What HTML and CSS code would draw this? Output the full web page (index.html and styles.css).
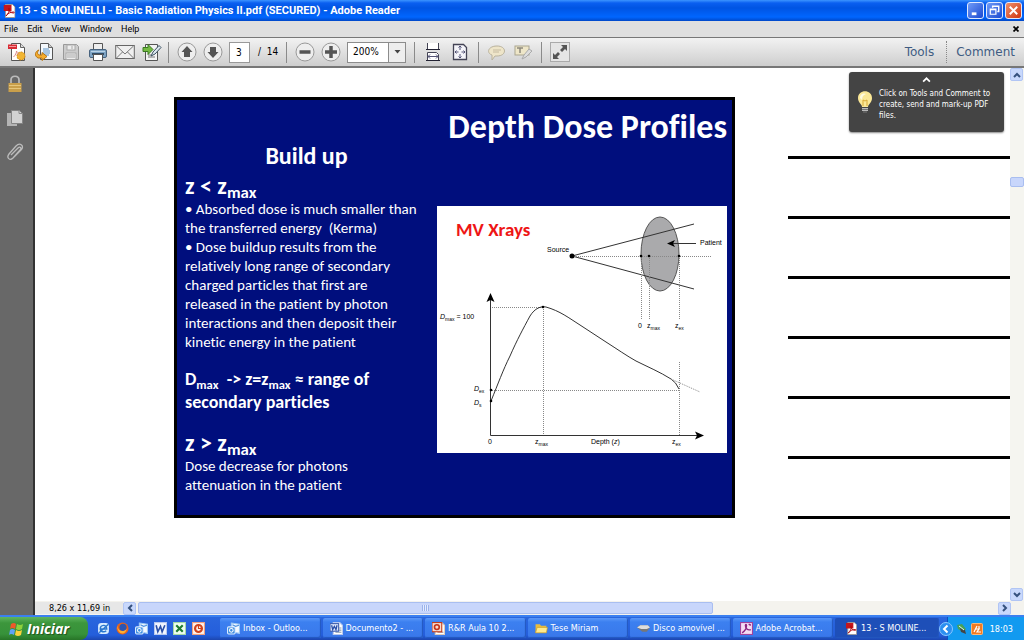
FILE: index.html
```
<!DOCTYPE html>
<html lang="en">
<head>
<meta charset="utf-8">
<title>13 - S MOLINELLI - Basic Radiation Physics II.pdf (SECURED) - Adobe Reader</title>
<link rel="stylesheet" href="styles.css">
</head>
<body>
<svg class="defs" aria-hidden="true">
  <defs>
    <symbol id="pdf" viewBox="0 0 12 14"><path d="M2 .5h7l2.500 2.500v10.500h-9.500z" fill="#fff" stroke="#999"/><rect y="1" width="8" height="6" fill="#c4161c"/><path d="M2.500 12c2-2 3.500-5 3.500-7 0-1.500-1.500-1-1 0 .5 2.500 2.500 4 5 4 1 0 1-1 0-1-3 0-6 1.500-7.500 4z" fill="none" stroke="#b00c12"/></symbol>
    <symbol id="outlook" viewBox="0 0 12 12"><path d="M4 1l7.500 1v8.500L4 9z" fill="#f4f9ff" stroke="#9cc8f4"/><rect x=".5" y="4.500" width="7" height="6.500" rx="1" fill="#3c8ce0" stroke="#dcecff"/><circle cx="4" cy="7.700" r="1.700" fill="none" stroke="#fff"/><path d="M5 2.500l3 1.500 3-1" stroke="#4a90e0" fill="none"/></symbol>
    <symbol id="word" viewBox="0 0 12 12"><rect x=".5" y=".5" width="11" height="11" fill="#f2f6ff" stroke="#b9c9ee"/><path d="M2 3l1.500 6L6 4l1.500 5L10 3" fill="none" stroke="#2a4fa8" stroke-width="1.500"/></symbol>
    <symbol id="worddoc" viewBox="0 0 12 12"><path d="M3 .5h6l2.500 2.500v8.500H3z" fill="#fff" stroke="#b9c9ee"/><path d="M8.500 5.500h2M8.500 7.500h2M5 9.500h5.500" stroke="#89a"/><rect y="1.500" width="8" height="7" fill="#dfe8fb" stroke="#3a5cae"/><path d="M1.500 3l1 4L4 4l1.500 3 1-4" fill="none" stroke="#2a4fa8" stroke-width="1.200"/></symbol>
    <symbol id="ppt" viewBox="0 0 12 12"><rect x=".5" y=".5" width="11" height="11" fill="#fff2ea" stroke="#f0a080"/><circle cx="6" cy="6" r="3.200" fill="none" stroke="#d0421c" stroke-width="2"/><path d="M6 2v4h4" fill="none" stroke="#d0421c"/></symbol>
    <symbol id="pptdoc" viewBox="0 0 12 12"><path d="M3 .5h6l2.500 2.500v8.500H3z" fill="#fff" stroke="#dcb"/><path d="M5 9.500h5.500" stroke="#a88"/><rect y=".5" width="9" height="8.500" fill="#f7d9cd" stroke="#c23c1a"/><circle cx="4.500" cy="4.700" r="2.200" fill="none" stroke="#c5331a" stroke-width="1.500"/></symbol>
  </defs>
</svg>

<header class="titlebar">
  <svg class="title-icon" viewBox="0 0 12 14"><use href="#pdf"/></svg>
  <span class="title-text">13 - S MOLINELLI - Basic Radiation Physics II.pdf (SECURED) - Adobe Reader</span>
  <button class="win" aria-label="Minimize"><svg viewBox="0 0 16 16"><path d="M4 11.500h5" stroke="#fff" stroke-width="3"/></svg></button>
  <button class="win" aria-label="Restore"><svg viewBox="0 0 16 16"><path d="M6 5V3.500h6.500V9H11" fill="none" stroke="#fff" stroke-width="1.500"/><path d="M3.500 6.500h6V12h-6zM3.500 7h6" fill="none" stroke="#fff" stroke-width="1.300"/></svg></button>
  <button class="win close" aria-label="Close"><svg viewBox="0 0 16 16"><path d="M4 4l8 8M12 4l-8 8" stroke="#fff" stroke-width="2"/></svg></button>
</header>

<nav class="menubar">
  <button>File</button><button>Edit</button><button>View</button><button>Window</button><button>Help</button>
  <button class="doc-close" aria-label="Close document"><svg viewBox="0 0 6 6"><path d="M.5.5l5 5M5.500.5l-5 5" stroke="#000" stroke-width="1.700"/></svg></button>
</nav>

<div class="toolbar">
  <div class="group files">
    <button class="tool" aria-label="Create PDF"><svg viewBox="0 0 20 20"><path d="M4.500 1.500h9l4 4v13h-13z" fill="#fff" stroke="#555"/><path d="M13.500 1.500v4h4" fill="#ddd" stroke="#666"/><rect x="1" y="2.500" width="9" height="4.500" fill="#d82c35"/><path d="M2 4.500h7" stroke="#f59a9e"/><circle cx="14" cy="14" r="4" fill="#f2b632" stroke="#cf8a1c" stroke-dasharray="2 1"/><path d="M6.500 15c2-2 3-4 3-6 1 3 2 3 3 4" fill="none" stroke="#d88"/></svg></button>
    <button class="tool" aria-label="Open"><svg viewBox="0 0 20 20"><path d="M6.500 1.500h8l4 4v12h-12z" fill="#f4f8fc" stroke="#555"/><path d="M14.500 1.500v4h4" fill="#ccc" stroke="#666"/><path d="M9 7h6M9 9h7M9 11h7M10 13h5" stroke="#5d93c5"/><path d="M5 8C1 9 0 14 4 16h4v2.500l5-4-5-4V13H5c-2-1-2-3 0-5z" fill="#f5ad2e" stroke="#b87613"/></svg></button>
    <button class="tool" aria-label="Save" disabled><svg viewBox="0 0 20 20"><path d="M2.500 2.500h13l2 2v13h-15z" fill="#ccc" stroke="#999"/><rect x="6" y="3" width="8" height="5" fill="#eee" stroke="#aaa"/><rect x="5" y="11" width="10" height="6.500" fill="#eee" stroke="#aaa"/><path d="M6 13h8M6 15h8M11 4v3" stroke="#aaa"/></svg></button>
    <button class="tool" aria-label="Print"><svg viewBox="0 0 20 20"><path d="M5.500 1.500h9v8h-9z" fill="#eee" stroke="#555"/><rect x="1.500" y="7.500" width="17" height="8" rx="1.500" fill="#7ea4c4" stroke="#47627d"/><path d="M3 9.500h14" stroke="#b9d2e6"/><path d="M4 12h12" stroke="#344d65" stroke-width="2"/><path d="M5.500 12.500h9v6h-9z" fill="#fff" stroke="#555"/></svg></button>
    <button class="tool" aria-label="E-mail"><svg viewBox="0 0 20 20"><rect x=".7" y="3.500" width="18.600" height="13" fill="#efefef" stroke="#666"/><path d="M1.500 4l8.500 8 8.500-8M1.500 16l6-6M18.500 16l-6-6" fill="none" stroke="#777"/></svg></button>
    <button class="tool" aria-label="Sign"><svg viewBox="0 0 20 20"><path d="M3.500 2.500h12v16h-12z" fill="#f3f3f3" stroke="#555"/><path d="M6 15h7M6 13h3" stroke="#777"/><path d="M1 5.500h5V2.500l5 5-5 5V9.500H1z" fill="#75bb43" stroke="#3a7921"/><path d="M9 14l2-4 6-6.500 2 2-6 6.500z" fill="#dce7ee" stroke="#394f60"/></svg></button>
  </div>
  <div class="group pages">
    <button class="tool" aria-label="Previous page"><svg viewBox="0 0 20 20"><circle cx="10" cy="10" r="9" fill="#eee" stroke="#999"/><path d="M10 4l5.500 6H13v5H7v-5H4.500z" fill="#555"/></svg></button>
    <button class="tool" aria-label="Next page"><svg viewBox="0 0 20 20"><circle cx="10" cy="10" r="9" fill="#eee" stroke="#999"/><path d="M10 16l5.500-6H13V5H7v5H4.500z" fill="#555"/></svg></button>
    <input class="page-no" aria-label="Page" value="3"><span class="page-total">/&nbsp; 14</span>
  </div>
  <div class="group zoom">
    <button class="tool" aria-label="Zoom out"><svg viewBox="0 0 20 20"><circle cx="10" cy="10" r="9" fill="#eee" stroke="#999"/><path d="M4.500 10h11" stroke="#555" stroke-width="3.500"/></svg></button>
    <button class="tool" aria-label="Zoom in"><svg viewBox="0 0 20 20"><circle cx="10" cy="10" r="9" fill="#eee" stroke="#999"/><path d="M4 10h12M10 4v12" stroke="#555" stroke-width="3.500"/></svg></button>
    <div class="combo"><input aria-label="Zoom level" value="200%"><button aria-label="Zoom levels"><svg viewBox="0 0 7 4"><path d="M.5 0h6l-3 3.500z" fill="#444"/></svg></button></div>
  </div>
  <div class="group fit">
    <button class="tool" aria-label="Fit width"><svg viewBox="0 0 20 20"><path d="M4.500 1v6.500h11V1" fill="#fff" stroke="#445"/><path d="M4.500 19v-8.500h9l2 2V19" fill="#fff" stroke="#445"/><path d="M3 7.500h14M3 18.500h14" stroke="#223"/><path d="M5 14.500h10M7 12.500l-2 2 2 2M13 12.500l2 2-2 2" fill="none" stroke="#557"/></svg></button>
    <button class="tool" aria-label="Fit page"><svg viewBox="0 0 20 20"><path d="M3.500 2.500h10l3 3v12h-13z" fill="#f5f5fa" stroke="#445" stroke-width="1.300"/><path d="M10 4v4M10 12v4M5 10h3.500M11.500 10H15M8.500 5.500L10 4l1.500 1.500M8.500 14.500L10 16l1.500-1.500M6.500 8.500L5 10l1.500 1.500M13.500 8.500L15 10l-1.500 1.500" fill="none" stroke="#557"/></svg></button>
  </div>
  <div class="group">
    <button class="tool" aria-label="Comment bubble" disabled><svg viewBox="0 0 20 20"><path d="M10 4c10 0 10 10 0 10H8l-3 4v-5C-1 11 1 4 10 4z" fill="#eee5c9" stroke="#b9b29d"/><path d="M6 8h8M6 10h6" stroke="#c5baa0"/></svg></button>
    <button class="tool" aria-label="Highlight" disabled><svg viewBox="0 0 20 20"><rect x="2" y="4" width="14" height="9" fill="#eee6c8" stroke="#aaa58f"/><path d="M4 6h6M7 6v5" stroke="#8d897c" stroke-width="1.500"/><path d="M9 17l2-4 5-6 3 2-6 6z" fill="#ddd" stroke="#aaa"/></svg></button>
  </div>
  <div class="group"><button class="tool" aria-label="Full screen"><svg viewBox="0 0 20 20"><rect x=".5" y=".5" width="19" height="19" fill="#e5e5e5" stroke="#aaa"/><path d="M11 3h6v6l-2-2-3 3-2-2 3-3zM9 17H3v-6l2 2 3-3 2 2-3 3z" fill="#555"/></svg></button></div>
  <div class="panes"><button>Tools</button><button>Comment</button></div>
</div>

<main class="workspace">
  <aside class="sidebar">
    <button aria-label="Security"><svg viewBox="0 0 18 18"><path d="M5 9V5c0-5 8-5 8 0v4" fill="none" stroke="#bbb" stroke-width="1.700"/><rect x="2.500" y="8" width="13" height="9" fill="#c99f4b"/><path d="M3 10.500h12M3 13.500h12" stroke="#e6c67c"/></svg></button>
    <button aria-label="Pages"><svg viewBox="0 0 18 18"><path d="M1 4h10v13H1z" fill="#b4b4b4"/><path d="M5.500 1.500h8l3 3v10h-11z" fill="#d2d2d2" stroke="#858585"/><path d="M13 1.500v3h3.500" fill="none" stroke="#888"/></svg></button>
    <button aria-label="Attachments"><svg viewBox="0 0 18 18"><path d="M5 12l7-7c2-2 4 0 2 2l-7 8c-3 3-7 0-4-4l7-8c4-4 9 0 5 4l-7 7" fill="none" stroke="#bcbcbc" stroke-width="1.300"/></svg></button>
  </aside>

  <section class="document">
    <article class="slide">
      <h1>Depth Dose Profiles</h1>
      <div class="text">
        <h2>Build up</h2>
        <h3>z &lt; z<sub>max</sub></h3>
        <p>• Absorbed dose is much smaller than<br>the transferred energy&nbsp; (Kerma)<br>• Dose buildup results from the<br>relatively long range of secondary<br>charged particles that first are<br>released in the patient by photon<br>interactions and then deposit their<br>kinetic energy in the patient</p>
        <p class="key">D<sub>max</sub>&nbsp; -&gt; z=z<sub>max</sub> ≈ range of<br>secondary particles</p>
        <h3>z &gt; z<sub>max</sub></h3>
        <p>Dose decrease for photons<br>attenuation in the patient</p>
      </div>
      <figure class="chart">
        <svg viewBox="0 0 290 247" role="img" aria-label="Depth dose curve">
          <text class="chart-title" x="19" y="30">MV Xrays</text>
          <ellipse cx="223" cy="48" rx="19" ry="37" fill="#aaaaac" stroke="#555"/>
          <path class="thin" d="M135 50L257 18M135 50L257 83"/>
          <path class="dot" d="M135 50.500H275M204.500 50v63M212.500 50v63M242.500 50v63M53 101.500h53M106.500 101v128M53 184.500h189M242.500 156v73"/>
          <path class="thin" d="M232 37.500h27"/><path d="M230 37.500l8-3.500-2 3.500 2 3.500z"/>
          <circle cx="135" cy="50" r="2.500"/><circle cx="204" cy="50" r="1.300"/><circle cx="212" cy="50" r="1.300"/><circle cx="242" cy="50" r="1.300"/>
          <path class="axis" d="M53.500 91v138.500H262"/><path d="M53.500 87l4 9-4-2-4 2zM267 229.500l-9-4 2 4-2 4z"/>
          <path class="curve" d="M54 195C61 178 66 164 73 150C80 134 86 123 93 110C98 102 104 100 109 101C123 105 132 112 143 119L169 136C180 143 190 150 199 155C211 161 223 166 234 173Q239 176 242 183"/>
          <path class="dot" d="M234 173l29 13"/>
          <circle cx="106" cy="101" r="1.300"/><circle cx="54" cy="184" r="1.300"/><circle cx="54" cy="195" r="1.300"/>
          <g class="labels">
            <text x="110" y="46">Source</text><text x="263" y="39">Patient</text>
            <text x="201" y="122">0</text><text x="210" y="122">z<tspan class="s" dy="2">max</tspan></text><text x="238" y="122">z<tspan class="s" dy="2">ex</tspan></text>
            <text x="3" y="113"><tspan class="i">D</tspan><tspan class="s" dy="2">max</tspan><tspan dy="-2"> = 100</tspan></text>
            <text x="37" y="185"><tspan class="i">D</tspan><tspan class="s" dy="2">ex</tspan></text><text x="37" y="199"><tspan class="i">D</tspan><tspan class="s" dy="2">s</tspan></text>
            <text x="51" y="238">0</text><text x="98" y="238">z<tspan class="s" dy="2">max</tspan></text><text x="154" y="238">Depth (<tspan class="i">z</tspan>)</text><text x="235" y="238">z<tspan class="s" dy="2">ex</tspan></text>
          </g>
        </svg>
      </figure>
    </article>
    <div class="rules"><hr><hr><hr><hr><hr><hr><hr></div>
    <div class="tip" role="status">
      <svg class="tip-up" viewBox="0 0 8 5"><path d="M1 4l3-3 3 3" fill="none" stroke="#fff" stroke-width="1.500"/></svg>
      <svg class="bulb" viewBox="0 0 16 24"><path d="M5 16C5 13 1 12 1 7c0-9 14-9 14 0 0 5-4 6-4 9z" fill="#fbe897"/><path d="M3 7c0-5 5-5 6-4-3 1-4 3-4 6z" fill="#fffbe0"/><path d="M6 15V9l2 1 2-1v6" fill="none" stroke="#d9a936"/><path d="M5 17h6v3H5z" fill="#bbb"/><path d="M5 18.500h6M6 21h4" stroke="#777"/></svg>
      <p>Click on Tools and Comment to<br>create, send and mark-up PDF<br>files.</p>
    </div>
  </section>

  <div class="vscroll">
    <button aria-label="Scroll up"><svg viewBox="0 0 10 10"><path d="M2 7l3-3 3 3" fill="none" stroke="#35517e" stroke-width="2"/></svg></button>
    <span class="track-before"></span><span class="vthumb"></span><span class="track"></span>
    <button aria-label="Scroll down"><svg viewBox="0 0 10 10"><path d="M2 3l3 3 3-3" fill="none" stroke="#35517e" stroke-width="2"/></svg></button>
  </div>

  <div class="status">
    <span class="size">8,26 x 11,69 in</span>
    <button aria-label="Scroll left"><svg viewBox="0 0 10 10"><path d="M7 2L4 5l3 3" fill="none" stroke="#35517e" stroke-width="2"/></svg></button>
    <span class="hthumb"><i></i></span><span class="htrack"></span>
    <button aria-label="Scroll right"><svg viewBox="0 0 10 10"><path d="M3 2l3 3-3 3" fill="none" stroke="#35517e" stroke-width="2"/></svg></button>
  </div>
</main>

<footer class="taskbar">
  <button class="start"><svg viewBox="0 0 16 16"><path d="M3 3q3-2 5 0L7 8Q4 6 2 8z" fill="#f0582a"/><path d="M9 3q3 2 6 0l-1 5q-3 2-6 0z" fill="#8fd13c"/><path d="M2 9q2-2 5 0l-1 5q-3-2-5 0z" fill="#5fa2f5"/><path d="M8 9q3 2 6 0l-1 5q-3 2-6 0z" fill="#fbd23a"/></svg>Iniciar</button>
  <div class="quick">
    <button aria-label="Internet Explorer"><svg viewBox="0 0 12 12"><rect x="1" y="1" width="10" height="10" rx="3" fill="#d8ecff"/><path d="M3 6.500h6c0-5-6-4-6 0 0 3 4 3 5.500 1.500M2 10L10.500 2" fill="none" stroke="#2a77cf" stroke-width="1.300"/></svg></button>
    <button aria-label="Firefox"><svg viewBox="0 0 12 12"><circle cx="6" cy="6" r="5.500" fill="#e8621a"/><circle cx="6.500" cy="5" r="3.300" fill="#2b55b4"/><path d="M1 3c1 6 6 7 9 3-1 7-9 6-9-3z" fill="#fbb034"/></svg></button>
    <button aria-label="Outlook"><svg viewBox="0 0 12 12"><use href="#outlook"/></svg></button>
    <button aria-label="Word"><svg viewBox="0 0 12 12"><use href="#word"/></svg></button>
    <button aria-label="Excel"><svg viewBox="0 0 12 12"><rect x=".5" y=".5" width="11" height="11" fill="#f0fff0" stroke="#a7d8a7"/><path d="M3 3l6 6M9 3L3 9" stroke="#1f7d32" stroke-width="2"/></svg></button>
    <button aria-label="PowerPoint"><svg viewBox="0 0 12 12"><use href="#ppt"/></svg></button>
  </div>
  <div class="tasks">
    <button><svg viewBox="0 0 12 12"><use href="#outlook"/></svg>Inbox - Outloo...</button>
    <button><svg viewBox="0 0 12 12"><use href="#worddoc"/></svg>Documento2 - ...</button>
    <button><svg viewBox="0 0 12 12"><use href="#pptdoc"/></svg>R&amp;R Aula 10 2...</button>
    <button><svg viewBox="0 0 12 12"><path d="M.5 2h4l1 1.500h5V10H.5z" fill="#e9bc3e"/><path d="M.5 10l1.500-5h9.500l-1 5z" fill="#ffe98d" stroke="#c99a25" stroke-width=".6"/></svg>Tese Miriam</button>
    <button><svg viewBox="0 0 12 12"><path d="M0 5l3-2h7l2 2-3 4H5z" fill="#777"/><path d="M0 5l3-2h7l2 2-3 1.500H4z" fill="#ddd"/></svg>Disco amovível ...</button>
    <button><svg viewBox="0 0 12 12"><rect x=".5" y=".5" width="11" height="11" fill="#f5dcf3" stroke="#a0429c"/><path d="M2 10c3-2 4-5 4-7 0-1-1-1-1 0 0 3 2 5 5 4M8 2l2 1" fill="none" stroke="#8d2583" stroke-width="1.300"/></svg>Adobe Acrobat...</button>
    <button class="active"><svg viewBox="0 0 12 14"><use href="#pdf"/></svg>13 - S MOLINE...</button>
  </div>
  <div class="tray">
    <button class="expand" aria-label="Show hidden icons"><svg viewBox="0 0 14 14"><circle cx="7" cy="7" r="6.500" fill="#2b8ff0" stroke="#8cc8ff"/><path d="M8.500 3.500L5 7l3.500 3.500" fill="none" stroke="#fff" stroke-width="2"/></svg></button>
    <svg viewBox="0 0 12 12"><path d="M1 2l5-1 4 5-3 3-5-3z" fill="#48a058"/><path d="M4 5l5 2 1 4-5-2z" fill="#444"/><path d="M3 3l5 4" stroke="#dfe"/></svg>
    <svg viewBox="0 0 12 12"><rect x=".5" y=".5" width="11" height="11" rx="1" fill="#f27b22" stroke="#ffb774"/><path d="M3 9l3-6M4 6h4L6 9h4M8 3v3" fill="none" stroke="#fff" stroke-width="1.200"/></svg>
    <time>18:03</time>
  </div>
</footer>
</body>
</html>
```
FILE: styles.css
```
* { box-sizing: border-box; }
body {
  margin: 0;
  height: 100vh;
  display: flex;
  flex-direction: column;
  overflow: hidden;
  background: #fff;
  color: #000;
  font: 9px/12px "DejaVu Sans Condensed", "DejaVu Sans", sans-serif;
}
button { border: 0; padding: 0; background: none; color: inherit; font: inherit; }
input { font: inherit; color: inherit; }
svg { display: block; flex: none; }
.defs { position: absolute; width: 0; height: 0; }

.titlebar {
  flex: none;
  display: flex;
  align-items: center;
  gap: 2px;
  height: 21px;
  padding: 0 2px 0 3px;
  background: linear-gradient(#3c94ff 0, #0a5ff0 3px, #0054e3 8px, #0066ff 17px, #0048c8 21px);
}
.title-icon { width: 13px; height: 14px; }
.title-text { flex: 1; color: #fff; font: bold 11px/14px Roboto, sans-serif; white-space: nowrap; }
.win { width: 17px; height: 17px; border: 1px solid #dfe9ff; border-radius: 3px; background: linear-gradient(135deg, #6f9bf8, #1b49d0); }
.win svg { width: 15px; height: 15px; }
.win.close { background: linear-gradient(135deg, #f0906c, #cf3610); }

.menubar { flex: none; display: flex; align-items: center; gap: 9px; height: 16px; padding: 0 5px 0 4px; background: #dfdfdf; font-family: Roboto, sans-serif; }
.doc-close { margin-left: auto; }
.doc-close svg { width: 6px; height: 6px; }

.toolbar {
  flex: none;
  display: flex;
  align-items: center;
  height: 31px;
  padding-left: 4px;
  border-top: 1px solid #777;
  border-bottom: 2px solid #777;
  background: linear-gradient(#f2f2f2, #cecece);
}
.group { display: flex; align-items: center; gap: 6px; height: 21px; padding: 0 8px; border-left: 1px solid #8a8a8a; }
.group.files { gap: 7px; padding: 0 6px 0 3px; border: 0; }
.group.pages { padding-right: 6px; }
.group.fit { gap: 7px; }
.tool svg { width: 20px; height: 20px; }
.page-no { width: 21px; height: 21px; border: 1px solid #999; padding: 0 0 0 6px; background: #fff; font-size: 10px; }
.page-total { width: 24px; padding-left: 2px; font-size: 10px; white-space: nowrap; }
.combo { display: flex; width: 59px; height: 21px; border: 1px solid #8c8c8c; background: #fff; }
.combo input { width: 40px; border: 0; padding: 0 0 0 5px; background: none; font-size: 10px; }
.combo button { flex: 1; display: grid; place-items: center; border-left: 1px solid #8c8c8c; background: #eee; }
.combo svg { width: 7px; height: 4px; }
.panes { display: flex; margin-left: auto; height: 22px; color: #3f5c82; font: 12px/20px "DejaVu Sans", sans-serif; }
.panes button { padding: 0 12px; white-space: nowrap; }
.panes button + button { padding: 0 9px; border-left: 1px dotted #888; }

.workspace { flex: 1; min-height: 0; display: grid; grid-template: minmax(0, 1fr) 14px / 35px minmax(0, 1fr) 14px; }
.sidebar { grid-row: 1 / 3; display: flex; flex-direction: column; align-items: center; gap: 16px; padding: 7px 3px 0 0; border-right: 2px solid #333; background: #686868; }
.sidebar svg { width: 18px; height: 18px; }
.document { position: relative; display: flex; align-items: flex-start; gap: 53px; padding: 29px 0 0 139px; overflow: hidden; }
.slide {
  flex: none;
  display: grid;
  grid-template-columns: 243px 290px;
  column-gap: 9px;
  align-items: start;
  width: 561px;
  padding: 10px 4px 20px 8px;
  border: 3px solid #000;
  background: #000e7d;
  color: #fff;
  font: 15px/19px "Calibri", "Carlito", "Lato", sans-serif;
  font-variant-ligatures: none;
}
.slide h1 { grid-column: 1 / 3; margin: 0; text-align: right; font-size: 34px; line-height: 34px; white-space: nowrap; }
.text h2 { margin: 0; text-align: center; font-size: 24px; line-height: 24px; }
.text h3 { margin: 4px 0 0; font-size: 24px; line-height: 28px; }
.text p { margin: 0; white-space: nowrap; }
.text sub { font-size: 70%; line-height: 0; vertical-align: -4px; }
.text .key { margin: 16px 0 15px; font-size: 18px; line-height: 23px; font-weight: bold; }
.text .key + h3 { margin-top: 0; }
.chart { margin: 62px 0 0; background: #fff; }
.chart svg { width: 100%; height: auto; }
.chart-title { fill: #ee1515; font-size: 19px; font-weight: bold; }
.thin, .axis, .curve { fill: none; stroke: #333; }
.dot { fill: none; stroke: #888; stroke-dasharray: 1 1; }
.labels { font: 7px "Liberation Sans", sans-serif; }
.labels .s { font-size: 5px; }
.labels .i { font-style: italic; }
.rules { flex: 1; display: flex; flex-direction: column; gap: 57px; padding-top: 59px; }
.rules hr { width: 100%; height: 3px; margin: 0; border: 0; background: #000; }
.tip {
  position: absolute;
  top: 4px;
  right: 6px;
  display: grid;
  grid-template-columns: 16px auto;
  column-gap: 6px;
  align-content: start;
  width: 155px;
  height: 60px;
  padding: 5px 8px;
  border-radius: 3px;
  background: #444;
  box-shadow: 0 1px 2px #888;
  color: #fff;
  font: 8px/11px "DejaVu Sans Condensed", "DejaVu Sans", sans-serif;
}
.tip-up { grid-column: 1 / 3; justify-self: center; width: 9px; height: 6px; }
.tip p { margin: 5px 0 0; white-space: nowrap; }
.bulb { width: 16px; height: 24px; margin-top: 8px; }

.vscroll { display: flex; flex-direction: column; background: #f5f5f0; }
.vscroll button, .status button { flex: none; display: grid; place-items: center; width: 13px; height: 13px; border: 1px solid #b1c5f4; border-radius: 2px; background: #c8d8fc; }
.vscroll button svg, .status button svg { width: 10px; height: 10px; }
.vthumb { flex: none; height: 10px; border: 1px solid #a9bef0; border-radius: 2px; background: #c8d6fb; }
.track-before { flex: 24; }
.track { flex: 100; }

.status { grid-column: 2 / 4; display: flex; align-items: center; padding-right: 13px; background: #f4f3ee; }
.size { width: 88px; padding-left: 14px; background: #e7e7e7; white-space: nowrap; }
.hthumb { flex: 574; display: grid; place-items: center; height: 12px; margin-left: 2px; border: 1px solid #a9bef0; border-radius: 2px; background: #c8d6fb; }
.hthumb i { width: 7px; height: 6px; background: repeating-linear-gradient(90deg, #9bb3ea 0 1px, #e4ecff 1px 2px); }
.htrack { flex: 286; }

.taskbar { flex: none; display: flex; height: 25px; border-top: 2px solid #3b80f0; background: linear-gradient(#2a66de, #245edb 18px, #1c46b0); color: #fff; }
.start { display: flex; align-items: center; gap: 3px; width: 88px; padding-left: 8px; border-radius: 0 8px 8px 0; background: linear-gradient(#5fb55f, #3c963c 6px, #37923a 17px, #277427); font: italic bold 14px/20px "Open Sans", sans-serif; text-shadow: 1px 1px 1px #1d511d; }
.start svg { width: 16px; height: 16px; }
.quick { display: flex; align-items: center; gap: 6px; padding: 0 15px 0 9px; }
.quick svg, .tasks svg { width: 13px; height: 13px; }
.tasks { flex: 1; min-width: 0; display: flex; gap: 2px; padding: 1px 0 2px; }
.tasks button { flex: 1; min-width: 0; display: flex; align-items: center; gap: 3px; padding-left: 7px; border-radius: 2px; background: linear-gradient(#5a98f8, #3c80f0 4px, #3977ea); box-shadow: inset -1px -1px 1px #2357be; white-space: nowrap; overflow: hidden; }
.tasks .active { padding-left: 10px; background: #1e4fb8; }
.tray { display: flex; align-items: center; gap: 3px; padding-right: 11px; background: linear-gradient(90deg, transparent 0 8px, #0c4fc0 8px 9px, #129af0 9px); }
.tray svg { width: 12px; height: 12px; }
.tray .expand svg { width: 14px; height: 14px; }
.tray time { margin-left: 4px; }
```
